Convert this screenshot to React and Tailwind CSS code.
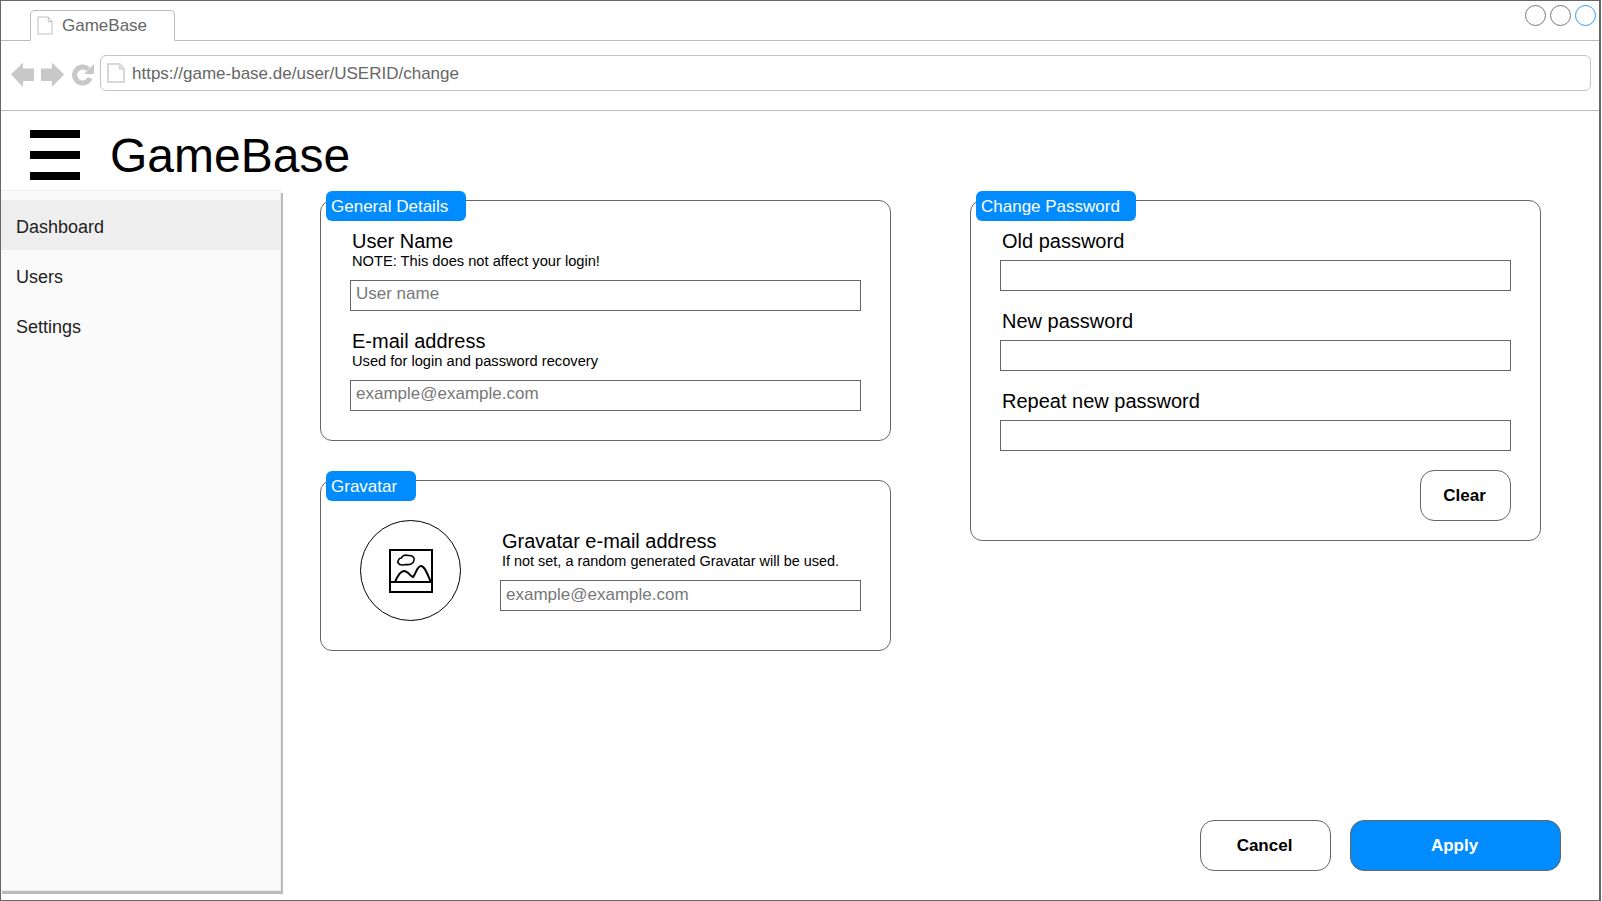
const font = { fontFamily: '"Liberation Sans", Arial, sans-serif' };

const PageIcon = ({ className, stroke = "#bdbdbd", width = 1 }) => (
  <svg viewBox="0 0 17 19" preserveAspectRatio="none" className={className} fill="none" stroke={stroke} strokeWidth={width}>
    <path d="M1 1H12L16 5.500V18H1Z" />
    <path d="M12 1V5.500H16" />
  </svg>
);

const Field = ({ label, note, noteClass = "text-[14.67px]", placeholder, inputClass = "leading-[25px]" }) => (
  <div>
    <div className="ml-[2px] text-[20px] leading-[23px] text-black">{label}</div>
    {note && <div className={`ml-[2px] leading-[16px] text-black ${noteClass}`}>{note}</div>}
    <div
      className={`h-[31px] border border-[#666] px-[5px] text-[17px] text-[#777] ${inputClass} ${
        note ? "mt-[11px]" : "mt-[7px]"
      }`}
    >
      {placeholder}
    </div>
  </div>
);

const Card = ({ title, tabWidth, className, children }) => (
  <section className={`relative w-[571px] rounded-[12px] border border-[#666] bg-white ${className}`}>
    <div
      className="absolute left-[4.5px] top-[-10px] h-[30px] rounded-[6px] bg-[#008cff] pl-[5.5px] pt-[1px] text-[17px] leading-[30px] text-white"
      style={{ width: tabWidth }}
    >
      {title}
    </div>
    {children}
  </section>
);

const WireButton = ({ primary, className, children }) => (
  <button
    className={`h-[51px] rounded-[14px] border border-[#666] pr-[2px] text-[17px] font-bold ${
      primary ? "bg-[#008cff] text-white" : "bg-white text-black"
    } ${className}`}
  >
    {children}
  </button>
);

export default function App() {
  return (
    <div style={font} className="flex h-[901px] w-[1601px] flex-col overflow-hidden border border-r-2 border-[#666] bg-white">
      {/* browser chrome */}
      <div className="relative flex h-[40px] items-end border-b border-[#bbb] pl-[29px]">
        <div className="mb-[-1px] flex h-[31px] w-[145px] items-center rounded-t-[5px] border border-b-white border-[#bbb] bg-white pl-[6px]">
          <PageIcon className="h-[19px] w-[16px]" />
          <span className="ml-[9px] text-[17px] text-[#666]">GameBase</span>
        </div>
        <div className="absolute right-[3px] top-[4px] flex gap-[4px]">
          <span className="h-[21px] w-[21px] rounded-full border border-[#777]" />
          <span className="h-[21px] w-[21px] rounded-full border border-[#777]" />
          <span className="h-[21px] w-[21px] rounded-full border border-[#2a9bf5]" />
        </div>
      </div>
      <div className="flex h-[70px] items-start border-b border-[#bbb] pl-[9px] pr-[8px] pt-[14px]">
        <svg viewBox="0 0 84 26" className="mt-[7px] h-[26px] w-[84px] shrink-0" fill="#c8c8c8">
          <path d="M1 12.500L13 0.500V6.500H24V19H13V25Z" />
          <path d="M31 6.500H42V0.500L54 12.500L42 25V19H31Z" />
          <path d="M78.200 7.300A8 8 0 1 0 80 16" fill="none" stroke="#c8c8c8" strokeWidth="5" />
          <path d="M84 2V12H74Z" />
        </svg>
        <div className="ml-[6px] flex h-[36px] flex-1 items-center rounded-[6px] border border-[#c4c4c4] pl-[6px]">
          <PageIcon className="h-[20px] w-[18px]" stroke="#d8d8d8" width={2} />
          <span className="ml-[7px] pt-[1px] text-[17px] text-[#666]">https://game-base.de/user/USERID/change</span>
        </div>
      </div>

      {/* app header */}
      <div className="flex h-[79px] items-start pl-[29px] pt-[19px]">
        <div className="flex h-[50px] w-[50px] flex-col justify-between">
          <span className="h-[8px] bg-black" />
          <span className="h-[8px] bg-black" />
          <span className="h-[8px] bg-black" />
        </div>
        <h1 className="ml-[30px] mt-[-2px] text-[48px] font-normal leading-[55px] text-black">GameBase</h1>
      </div>

      <div className="flex min-h-0 flex-1">
        {/* sidebar */}
        <aside className="ml-[-1px] h-[701px] w-[281px] shrink-0 border border-[#eee] bg-[#fafafa] pt-[9px] shadow-[2px_3px_0_#bbb]">
          {["Dashboard", "Users", "Settings"].map((item, i) => (
            <div
              key={item}
              className={`flex h-[50px] items-center pl-[15px] pt-[4px] text-[18px] text-[#222] ${i === 0 ? "bg-[#eee]" : ""}`}
            >
              {item}
            </div>
          ))}
        </aside>

        {/* content */}
        <main className="flex min-w-0 flex-1 flex-col pl-[39px] pt-[10px]">
          <div className="flex gap-[79px]">
            <div className="flex flex-col gap-[39px]">
              <Card title="General Details" tabWidth={140} className="h-[241px] pl-[29px] pr-[29px] pt-[29px]">
                <div className="flex flex-col gap-[19px]">
                  <Field label="User Name" note="NOTE: This does not affect your login!" placeholder="User name" />
                  <Field label="E-mail address" note="Used for login and password recovery" placeholder="example@example.com" />
                </div>
              </Card>
              <Card title="Gravatar" tabWidth={90} className="flex h-[171px] items-start pl-[39px] pr-[29px] pt-[39px]">
                <div className="flex h-[101px] w-[101px] shrink-0 items-center justify-center rounded-full border border-black">
                  <svg viewBox="0 0 44 44" className="h-[44px] w-[44px]" fill="none" stroke="#000" strokeWidth="2">
                    <rect x="1" y="1" width="42" height="42" />
                    <path d="M1 33H43" />
                    <path d="M6 33C9 26 12 22 15 22C19 22 21 27 24 28C27 25 28 17 32 17C36 17 39 27 42 33" />
                    <path
                      d="M13 16C9.500 16 8 13 9.500 11C10 9 12 9 12.500 9C13 6.500 16 5.500 19 6.500C23 6 26 8.500 25 11.500C24.500 15 20 16 17 15.500C15.500 15.500 14.500 16 13 16Z"
                      strokeWidth="1.600"
                    />
                  </svg>
                </div>
                <div className="ml-[39px] flex-1 pt-[10px]">
                  <Field
                    label="Gravatar e-mail address"
                    note="If not set, a random generated Gravatar will be used."
                    noteClass="text-[14.45px]"
                    placeholder="example@example.com"
                    inputClass="leading-[27px]"
                  />
                </div>
              </Card>
            </div>

            <Card title="Change Password" tabWidth={160} className="h-[341px] pl-[29px] pr-[29px] pt-[29px]">
              <div className="flex flex-col gap-[19px]">
                {["Old password", "New password", "Repeat new password"].map((label) => (
                  <Field key={label} label={label} />
                ))}
              </div>
              <div className="mt-[19px] flex justify-end">
                <WireButton className="w-[91px]">Clear</WireButton>
              </div>
            </Card>
          </div>

          <div className="mt-auto mb-[29px] flex justify-end gap-[19px] pr-[38px]">
            <WireButton className="w-[131px]">Cancel</WireButton>
            <WireButton primary className="w-[211px]">Apply</WireButton>
          </div>
        </main>
      </div>
    </div>
  );
}
